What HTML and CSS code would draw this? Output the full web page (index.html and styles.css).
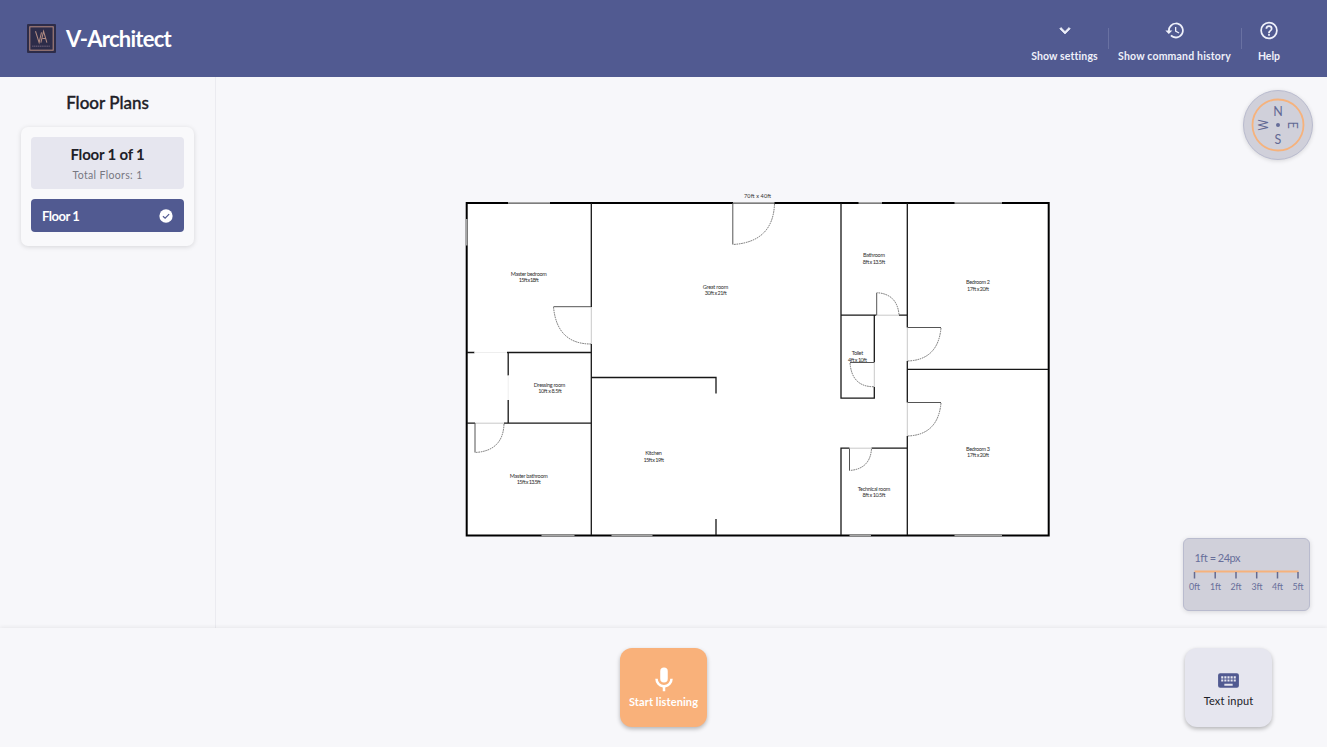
FILE: index.html
```html
<!DOCTYPE html>
<html lang="en">
<head>
<meta charset="utf-8">
<title>V-Architect</title>
<link rel="stylesheet" href="styles.css">
</head>
<body>
<header class="topbar">
  <div class="brand">
    <svg class="logo" viewBox="0 0 28 28"><rect width="28" height="28" rx="1" fill="#2d2c49"/><rect x="2.7" y="2.7" width="22.6" height="22.6" fill="none" stroke="#b5897f" stroke-width="1"/><path d="M8.2 7l3.5 11L14 8M13.4 18L16 7l3.2 11M15 14h3" fill="none" stroke="#b28c83" stroke-width="1"/><path d="M5 21.5h17" stroke="#5d536d" stroke-width="1.3" stroke-dasharray="1.3 .5"/></svg>
    <h1 class="title">V-Architect</h1>
  </div>
  <nav class="actions">
    <button class="action settings"><svg viewBox="0 0 24 24"><path d="M7.41 8.59 12 13.17l4.59-4.58L18 10l-6 6-6-6z" stroke="currentColor" stroke-width=".8"/></svg><span>Show settings</span></button>
    <button class="action history"><svg viewBox="0 0 24 24"><path d="M13 3a9 9 0 0 0-9 9H1l3.89 3.89.07.14L9 12H6a7 7 0 1 1 2.06 4.94l-1.42 1.42A9 9 0 1 0 13 3zm-1 5v5l4.28 2.54.72-1.21-3.5-2.08V8z"/></svg><span>Show command history</span></button>
    <button class="action help"><svg viewBox="0 0 24 24"><path d="M11 18h2v-2h-2zm1-16a10 10 0 1 0 0 20 10 10 0 0 0 0-20m0 18a8 8 0 1 1 0-16 8 8 0 0 1 0 16m0-14a4 4 0 0 0-4 4h2a2 2 0 1 1 4 0c0 2-3 1.750-3 5h2c0-2.250 3-2.500 3-5a4 4 0 0 0-4-4"/></svg><span>Help</span></button>
  </nav>
</header>
<div class="workspace">
  <aside class="sidebar">
    <h2 class="side-title">Floor Plans</h2>
    <section class="floors">
      <div class="summary"><strong>Floor 1 of 1</strong><span>Total Floors: 1</span></div>
      <div class="floor"><span>Floor 1</span><svg viewBox="0 0 16 16"><circle cx="8" cy="8" r="7.600" fill="#fff"/><path d="M4.500 8.200l2.500 2.300 4.600-4.700" fill="none" stroke="#515a91" stroke-width="1.400"/></svg></div>
    </section>
  </aside>
  <main class="canvas">
    <svg class="plan" viewBox="216 77 1111 551">
      <rect x="466" y="202" width="583" height="334" fill="#fff"/>
      <g class="wall outer"><path d="M466.700 202.900H1048.700V535.500H466.700Z"/></g>
      <g class="wall">
        <path d="M591.300 203V307M591.300 344V535M467 352.500H474.500M507 352.500H591M508.200 352V375.500M508.200 400V423M467 423.200H475M504 423.200H591M591 377.500H716V393.500M716 519V535"/>
        <path d="M841 203V398.200H874.300V387M874.300 362.500V315.200M841 315.200H876.500M899 315.200H907.500M907.300 203V327.500M907.300 361V402.500M907.300 436V535M907.300 369.300H1048M841 535V448.200H849.500M871.500 448.200H907"/>
      </g>
      <g class="opening">
        <path d="M508 202.900H550M733 202.900H774.500M858.500 202.900H882M954.500 202.900H1002M466.700 219V245.500M541.500 535.500H574.500M611.500 535.500H652.500M849.500 535.500H871M954.500 535.500H1002"/>
      </g>
      <g class="threshold"><path d="M591.300 307V344M475 423.200H504M876.500 315.200H899M874.300 362.500V387M907.300 327.500V361M907.300 402.500V436M849.500 448.200H871.500"/><path class="faint" d="M474.500 352.500H507M508.200 375.500V400"/></g>
      <g class="leaf"><path d="M591 306.700H553.500M475 423V452.500M732.800 203V244.500M876.700 315V292.700M907.500 327.500H941M907.500 402.500H941M874 362.500H850M849.500 448.500V470.500"/></g>
      <g class="swing"><path d="M553.500 307Q557 344 591 344M504 424Q503 451 475 452.500M774.500 204Q773 242 733 244.500M899 314.500Q897 294 877 292.700M941 328Q938 360 907.500 361M941 403Q938 435 907.500 436M850 363Q852 387 874 386.700M871.500 449Q870 469 849.500 470.500"/></g>
      <g class="labels">
        <text x="757.500" y="198" textLength="27">70ft x 40ft</text>
        <text x="528.800" y="276" textLength="36">Master bedroom</text><text x="528.800" y="282.300" textLength="20">15ft x 18ft</text>
        <text x="715.500" y="288.500" textLength="25.500">Great room</text><text x="715.800" y="294.700" textLength="22">30ft x 21ft</text>
        <text x="874" y="257.200" textLength="22">Bathroom</text><text x="874" y="263.500" textLength="22.500">8ft x 13.5ft</text>
        <text x="978" y="284.300" textLength="24">Bedroom 2</text><text x="978" y="290.500" textLength="22">17ft x 20ft</text>
        <text x="857.400" y="355.300" textLength="11.500">Toilet</text><text x="857.500" y="361.500" textLength="19">4ft x 10ft</text>
        <text x="549.500" y="386.600" textLength="31.500">Dressing room</text><text x="550" y="392.900" textLength="23.500">10ft x 8.5ft</text>
        <text x="653.500" y="455.300" textLength="16.500">Kitchen</text><text x="653.700" y="461.500" textLength="20.500">15ft x 19ft</text>
        <text x="528.800" y="478" textLength="38">Master bathroom</text><text x="528.800" y="484.300" textLength="24">15ft x 13.5ft</text>
        <text x="978" y="451.200" textLength="24">Bedroom 3</text><text x="978" y="457.400" textLength="22">17ft x 20ft</text>
        <text x="874" y="490.500" textLength="32.500">Technical room</text><text x="874" y="496.700" textLength="23">8ft x 10.5ft</text>
      </g>
    </svg>
    <div class="compass"><svg viewBox="0 0 70 70"><circle cx="35" cy="35" r="25.500" fill="none" stroke="#f6b27c" stroke-width="1.800"/><circle cx="35" cy="35" r="2" fill="#666d99"/><text x="35" y="25.800">N</text><text x="35" y="53.600">S</text><text transform="translate(25.200 35) rotate(-90)" textLength="11" lengthAdjust="spacingAndGlyphs">W</text><text transform="translate(44.500 35) rotate(90)">E</text></svg></div>
    <div class="scale"><svg viewBox="0 0 127 73"><text class="ratio" x="11.500" y="24" textLength="46">1ft = 24px</text><path d="M11.500 33.500H115.500" stroke="#f6b27c" stroke-width="2"/><path d="M11.500 34V40.500M32.200 34V40.500M53 34V40.500M73.700 34V40.500M94.500 34V40.500M115 34V40.500" stroke="#666b90" stroke-width="1.500"/><g class="ticks"><text x="11.500" y="52">0ft</text><text x="32.500" y="52">1ft</text><text x="53" y="52">2ft</text><text x="74" y="52">3ft</text><text x="94.500" y="52">4ft</text><text x="115" y="52">5ft</text></g></svg></div>
  </main>
</div>
<footer class="bottom">
  <button class="tile listen"><svg viewBox="0 0 24 24"><path d="M12 14a3 3 0 0 0 3-3V5a3 3 0 0 0-6 0v6a3 3 0 0 0 3 3m5-3a5 5 0 0 1-10 0H5a7 7 0 0 0 6 6.920V21h2v-3.080A7 7 0 0 0 19 11z"/></svg><span>Start listening</span></button>
  <button class="tile keyboard"><svg viewBox="0 0 24 24"><path d="M20 5H4a2 2 0 0 0-2 2v10a2 2 0 0 0 2 2h16a2 2 0 0 0 2-2V7a2 2 0 0 0-2-2m-9 3h2v2h-2zm0 3h2v2h-2zM8 8h2v2H8zm0 3h2v2H8zm-1 2H5v-2h2zm0-3H5V8h2zm9 7H8v-2h8zm0-4h-2v-2h2zm0-3h-2V8h2zm3 3h-2v-2h2zm0-3h-2V8h2z"/></svg><span>Text input</span></button>
</footer>
</body>
</html>
```
FILE: styles.css
```css
* { box-sizing: border-box; }
body { margin: 0; width: 1327px; height: 747px; display: flex; flex-direction: column; overflow: hidden; background: #f7f7fa; color: #202027; font-family: Lato, "Liberation Sans", sans-serif; }
button { border: 0; padding: 0; background: none; font-family: inherit; color: inherit; white-space: nowrap; }
h1, h2 { margin: 0; }
.topbar { height: 77px; flex: none; display: flex; justify-content: space-between; background: #515a91; color: #fff; padding: 0 30px 0 27px; }
.brand { display: flex; align-items: center; gap: 10px; }
.logo { width: 29px; height: 29px; }
.title { font-size: 22px; line-height: 28px; letter-spacing: -.75px; padding-top: 1px; }
.actions { display: flex; padding-top: 20px; }
.action { position: relative; height: 44px; display: flex; flex-direction: column; align-items: center; gap: 7px; color: #eef0fa; font-size: 10.500px; font-weight: 700; line-height: 16px; }
.action svg { width: 22px; height: 22px; fill: currentColor; }
.settings { width: 87px; letter-spacing: .12px; }
.history { width: 133px; letter-spacing: .18px; }
.help { width: 56px; }
.history, .help { background: linear-gradient(#6971a2, #6971a2) 0 8px / 1px 21px no-repeat; }
.workspace { height: 551px; display: flex; flex: none; }
.sidebar { width: 216px; border-right: 1px solid #ebebf0; padding: 14px 21px; }
.side-title { text-align: center; font-size: 17px; font-weight: 500; line-height: 23px; -webkit-text-stroke: .35px; margin-bottom: 13px; }
.floors { width: 173px; height: 119px; border-radius: 7px; padding: 10px; display: flex; flex-direction: column; gap: 10px; box-shadow: 0 1px 5px #0002; background: #f9f9fb; }
.summary { height: 52px; border-radius: 4px; background: #e6e6ef; display: flex; flex-direction: column; align-items: center; padding-top: 8px; }
.summary strong { font-size: 15px; line-height: 19px; letter-spacing: -.2px; }
.summary span { font-size: 10.500px; line-height: 14px; margin-top: 4px; color: #777781; letter-spacing: .35px; }
.floor { height: 33px; border-radius: 4px; background: #515a91; color: #fff; display: flex; justify-content: space-between; align-items: center; padding: 0 11px; font-size: 13px; font-weight: 700; letter-spacing: -.5px; }
.floor svg { width: 14px; height: 14px; }
.canvas { position: relative; flex: 1; }
.plan { display: block; width: 1111px; height: 551px; }
.wall { fill: none; stroke: #171717; stroke-width: 1.300; }
.outer { stroke: #000; stroke-width: 2; }
.opening { stroke: #a7a7a7; stroke-width: 1.600; }
.threshold { stroke: #c9c9c9; stroke-width: 1; }
.faint { stroke: #eee; }
.leaf { stroke: #555; stroke-width: 1; }
.swing { fill: none; stroke: #606060; stroke-width: .9; stroke-dasharray: 1.600 .8; }
.labels { fill: #303030; font-size: 5.500px; text-anchor: middle; }
.compass { position: absolute; right: 14px; top: 13px; width: 70px; height: 70px; border-radius: 50%; background: #d0d0da; border: 1.500px solid #b9bbce; box-shadow: 0 1px 4px #0002; }
.compass svg { position: absolute; left: -1px; top: -1px; width: 70px; height: 70px; }
.compass text { font-size: 12.500px; text-anchor: middle; fill: #626994; }
.scale { position: absolute; right: 17px; bottom: 17px; width: 127px; height: 73px; border-radius: 6px; background: #d0d0da; border: 1.500px solid #b9bbce; box-shadow: 0 1px 5px #0002; }
.scale svg { position: absolute; left: -1px; top: -1px; width: 127px; height: 73px; }
.scale text { fill: #686f9b; }
.ratio { font-size: 11px; }
.ticks { font-size: 8.800px; text-anchor: middle; }
.bottom { height: 119px; flex: none; background: #f7f7fa; box-shadow: 0 -1px 4px #0001; display: grid; grid-template-columns: 1fr 87px 1fr; padding: 20px 55px 0; z-index: 1; }
.tile { width: 87px; height: 79px; border-radius: 12px; display: flex; flex-direction: column; align-items: center; box-shadow: 0 2px 4px #0004; font-size: 11px; }
.listen { grid-column: 2; background: #f9b17a; color: #fff; padding-top: 17px; font-weight: 700; letter-spacing: .1px; }
.listen svg { width: 30px; height: 30px; fill: currentColor; }
.keyboard { justify-self: end; background: #e6e6ef; padding-top: 20px; gap: 1px; letter-spacing: .15px; }
.keyboard svg { width: 25px; height: 25px; fill: #515a91; }
```
